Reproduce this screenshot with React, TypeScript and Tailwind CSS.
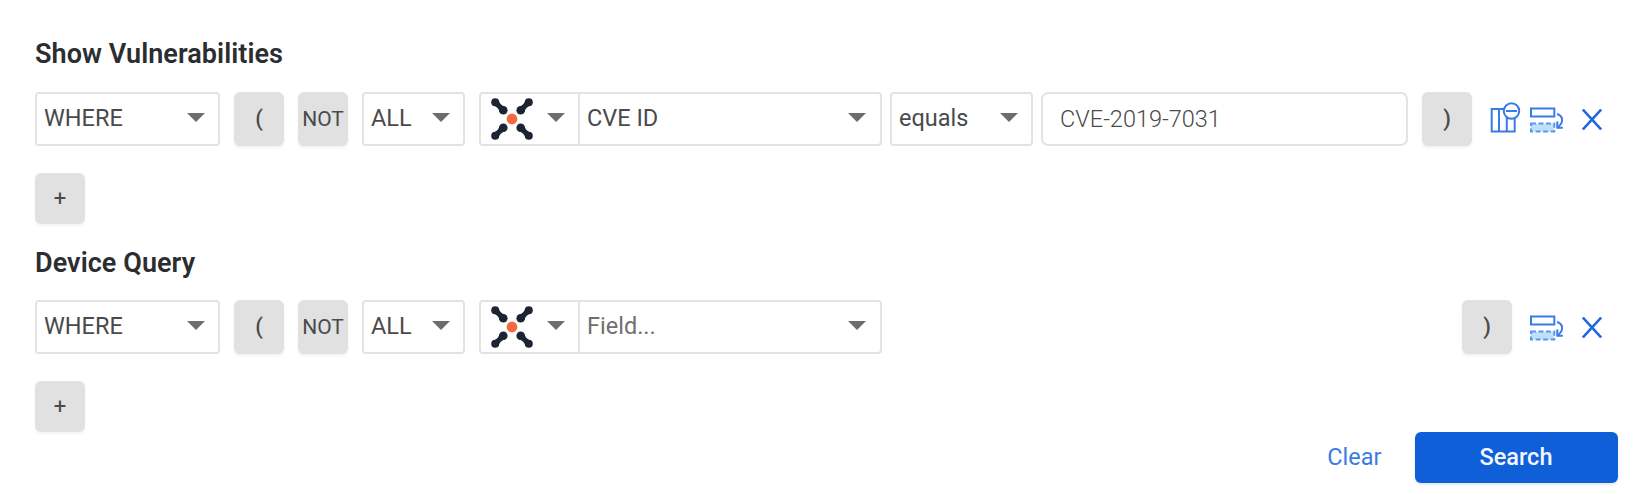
import React from 'react';

function Caret() {
  return (
    <svg width="18" height="9" viewBox="0 0 18 9" className="mb-[3px] shrink-0" fill="#6d6d6d">
      <path d="M0 0h18L9 9z" />
    </svg>
  );
}

function SelectBox({ label, className }: { label: string; className: string }) {
  return (
    <div className={`flex h-[54px] shrink-0 items-center justify-between rounded-[4px] border-2 border-[#e3e3e3] pl-[7px] pr-[13px] ${className}`}>
      <span className="pb-px">{label}</span>
      <Caret />
    </div>
  );
}

function GrayButton({ label, className }: { label: string; className: string }) {
  return (
    <button className={`flex w-[50px] shrink-0 items-center justify-center rounded-[6px] bg-[#e1e1e1] shadow-[0_2px_3px_rgba(0,0,0,0.05)] ${className}`}>
      {label}
    </button>
  );
}

function Logo() {
  return (
    <svg width="42" height="42" viewBox="0 0 42 42" className="shrink-0">
      {[0, 90, 180, 270].map((angle) => (
        <g key={angle} transform={`rotate(${angle} 21 21)`} fill="#1d2433">
          <circle cx="4.200" cy="4.200" r="4" />
          <circle cx="12.300" cy="12.300" r="4.300" />
          <path d="M7.500 2Q8.600 7 14.500 9L9 14.500Q7 8.600 2 7.500z" />
        </g>
      ))}
      <circle cx="21" cy="21" r="5.400" fill="#f5693b" />
    </svg>
  );
}

function FieldSelect({ label, className }: { label: string; className: string }) {
  return (
    <div className="ml-[14px] flex h-[54px] w-[403px] shrink-0 rounded-[4px] border-2 border-[#e3e3e3]">
      <div className="flex w-[99px] items-center justify-between border-r-2 border-[#e3e3e3] pl-[10px] pr-[13px]">
        <Logo />
        <Caret />
      </div>
      <div className="flex flex-1 items-center justify-between pl-[7px] pr-[14px]">
        <span className={`pb-px ${className}`}>{label}</span>
        <Caret />
      </div>
    </div>
  );
}

function ColumnsIcon() {
  return (
    <svg width="31" height="31" viewBox="0 0 31 31" className="shrink-0" fill="none" stroke="#3b7be6" strokeWidth="2">
      <path d="M14 7H1.700v22.500h23V17M9 7v22.500M16.800 15v14.500" />
      <circle cx="21.500" cy="9" r="7.700" />
      <path d="M16 9h11" />
    </svg>
  );
}

function DuplicateIcon() {
  return (
    <svg width="35" height="26" viewBox="0 0 35 26" className="shrink-0" fill="none" stroke="#3b7be6" strokeWidth="2">
      <path d="M2 1.500h23.300v8H2z" />
      <path d="M2 16.500h23.300v8H2z" fill="#bfe0fb" stroke="#5b97ea" strokeDasharray="5 2.500" />
      <path d="M28 7c6.500 2 6.800 8.500.8 13.300" />
      <path d="M28.300 14.500v6.300h5.500" />
    </svg>
  );
}

function CloseIcon() {
  return (
    <svg width="20" height="21" viewBox="0 0 20 21" className="shrink-0" fill="none" stroke="#1f68e0" strokeWidth="2.600">
      <path d="M.8.500l18.400 20M19.200.500L.8 20.500" />
    </svg>
  );
}

function RowStart() {
  return (
    <>
      <SelectBox label="WHERE" className="w-[185px]" />
      <GrayButton label="(" className="ml-[14px] h-[54px] pb-[2px] text-[22px] font-medium" />
      <GrayButton label="NOT" className="ml-[14px] h-[54px] pt-px text-[21px]" />
      <SelectBox label="ALL" className="ml-[14px] w-[103px]" />
    </>
  );
}

export default function App() {
  return (
    <main className="h-[494px] w-[1635px] overflow-hidden bg-white pl-[35px] pt-[38px] font-['Roboto',sans-serif] text-[23.5px] text-[#4a4a4a]">
      <h2 className="h-[54px] text-[27px] font-semibold leading-[32px] tracking-[0.06px] text-[#2b2d30]">Show Vulnerabilities</h2>
      <div className="flex h-[54px] items-center">
        <RowStart />
        <FieldSelect label="CVE ID" className="" />
        <SelectBox label="equals" className="ml-2 w-[143px]" />
        <div className="ml-[8px] flex h-[54px] w-[367px] shrink-0 items-center rounded-[7px] border-2 border-[#e3e3e3] pl-[17px] pt-[2px] font-light">
          CVE-2019-7031
        </div>
        <GrayButton label=")" className="ml-[14px] h-[54px] pb-[2px] text-[22px] font-medium" />
        <div className="ml-[18px] flex items-center">
          <div className="mb-1"><ColumnsIcon /></div>
          <div className="ml-[8px] mt-[2px]"><DuplicateIcon /></div>
          <div className="ml-[18px]"><CloseIcon /></div>
        </div>
      </div>
      <GrayButton label="+" className="mt-[27px] h-[51px] pb-px text-[22px]" />

      <h2 className="mt-[22px] h-[54px] pt-px text-[27px] font-semibold leading-[32px] tracking-[0.06px] text-[#2b2d30]">Device Query</h2>
      <div className="flex h-[54px] items-center">
        <RowStart />
        <FieldSelect label="Field..." className="text-[#6f6f6f]" />
        <GrayButton label=")" className="ml-[580px] h-[54px] pb-[2px] text-[22px] font-medium" />
        <div className="ml-[17px] flex items-center">
          <div className="mt-[2px]"><DuplicateIcon /></div>
          <div className="ml-[18px]"><CloseIcon /></div>
        </div>
      </div>
      <GrayButton label="+" className="mt-[27px] h-[51px] pb-px text-[22px]" />

      <div className="flex items-center justify-end pr-[17.5px]">
        <button className="mr-[33px] text-[#3b7be6]">Clear</button>
        <button className="flex h-[51px] w-[203px] items-center justify-center rounded-[6px] bg-[#0f5fd9] font-medium text-[#f3f7fd] shadow-[0_2px_3px_rgba(0,0,0,0.1)]">
          Search
        </button>
      </div>
    </main>
  );
}
